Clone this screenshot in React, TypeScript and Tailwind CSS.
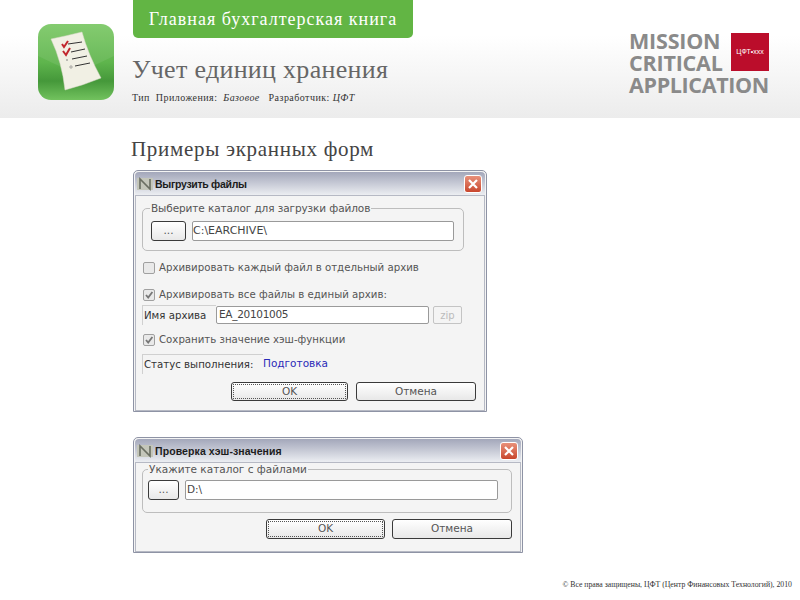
const sans = "font-['DejaVu_Sans',sans-serif]";

function AppIcon() {
  return (
    <svg width="76" height="76" viewBox="0 0 76 76" className="shrink-0">
      <defs>
        <linearGradient id="ig" x1="0" y1="0" x2="0" y2="1">
          <stop offset="0" stopColor="#7ac864" />
          <stop offset="0.5" stopColor="#5fb54d" />
          <stop offset="0.75" stopColor="#45983a" />
          <stop offset="1" stopColor="#72c25e" />
        </linearGradient>
      </defs>
      <rect x="0" y="0" width="76" height="76" rx="13" fill="url(#ig)" />
      <path d="M0 32 L38 50 L76 32 L76 13 Q76 0 63 0 L13 0 Q0 0 0 13 Z" fill="#fff" opacity="0.08" />
      <path d="M13 15 Q28 12 44 8 Q50 30 63 54 Q46 61 27 66 Q24 38 13 15 Z" fill="#f1f0e4" stroke="#d9d8c8" strokeWidth="0.5" />
      <g stroke="#333" strokeWidth="1" fill="none">
        <path d="M30 20 L44 18" />
        <path d="M33 28 L47 25" />
        <path d="M34 35 L49 32" />
        <path d="M37 42 L52 39" />
      </g>
      <g stroke="#c1272d" strokeWidth="2" fill="none">
        <path d="M24 20 L26 23 L30 17" />
        <path d="M25 27 L28 31 L32 24" />
      </g>
      <circle cx="29" cy="36" r="0.8" fill="#777" />
      <circle cx="33" cy="43" r="1.2" fill="none" stroke="#777" strokeWidth="0.6" />
    </svg>
  );
}

function CloseBtn() {
  return (
    <div className="w-[18px] h-[18px] rounded-[3px] border border-white bg-gradient-to-b from-[#e8907a] to-[#c8452c] flex items-center justify-center shrink-0">
      <svg width="12" height="12" viewBox="0 0 12 12">
        <path d="M2 2 L10 10 M10 2 L2 10" stroke="#fff" strokeWidth="2.2" />
      </svg>
    </div>
  );
}

function TitleBar({ title, titleClass }: { title: string; titleClass: string }) {
  return (
    <div className="h-[23px] flex items-center pl-[2px] pr-[3px] bg-gradient-to-b from-[#a3a7ba] to-[#eceef2] rounded-t-[4px]">
      <svg width="16" height="14" viewBox="0 0 16 14" className="shrink-0">
        <rect x="0" y="1" width="16" height="12" fill="#c4c6ba" />
        <path d="M3 12 L3 2 L13 12 L13 2" stroke="#6a6e62" strokeWidth="1.6" fill="none" />
      </svg>
      <span className={`${titleClass} ml-[2px] mt-[2px] grow text-[10.5px] font-bold text-[#1c1c1c] font-['Liberation_Sans',sans-serif]`}>{title}</span>
      <CloseBtn />
    </div>
  );
}

function Button({ label, focused, className }: { label: string; focused?: boolean; className: string }) {
  return (
    <div
      className={`${className} rounded-[3px] border border-[#3a3a3a] bg-gradient-to-b from-white to-[#e8e8e8] flex items-center justify-center text-[10.5px] text-[#555] ${sans} ${focused ? "p-px" : ""}`}
    >
      {focused ? (
        <span className="w-full h-full border border-dotted border-[#555] flex items-center justify-center">{label}</span>
      ) : (
        label
      )}
    </div>
  );
}

function Input({ value, className }: { value: string; className: string }) {
  return (
    <div className={`${className} border border-[#9a9a9a] rounded-[2px] bg-white flex items-center text-[#444] ${sans}`}>
      {value}
    </div>
  );
}

function Group({ legend, legendClass, children, className }: { legend: string; legendClass: string; children: React.ReactNode; className: string }) {
  return (
    <div className={`${className} relative border border-[#bdbdbd] rounded-[5px]`}>
      <span className={`${legendClass} absolute -top-[7px] bg-[#f4f4f4] px-px text-[10.5px] leading-[13px] text-[#555] ${sans}`}>{legend}</span>
      {children}
    </div>
  );
}

function Check({ label, checked }: { label: string; checked?: boolean }) {
  return (
    <div className="h-[14px] flex items-center pl-[7px]">
      <div className="w-[12px] h-[12px] border border-[#a0a0a0] rounded-[2px] bg-[#e9e9e9] flex items-center justify-center">
        {checked && (
          <svg width="10" height="10" viewBox="0 0 10 10">
            <path d="M2 5 L4.2 7.6 L8.4 2" stroke="#777" strokeWidth="1.8" fill="none" />
          </svg>
        )}
      </div>
      <span className={`ml-[4px] text-[10.2px] text-[#555] ${sans}`}>{label}</span>
    </div>
  );
}

function Dialog1() {
  return (
    <div className="w-[354px] h-[242px] p-px border border-[#8e93a5] rounded-t-[5px] bg-[#f4f4f4]">
      <TitleBar title="Выгрузить файлы" titleClass="tracking-[-0.3px]" />
      <div className="border border-[#b6b9c4] h-[216px] pt-[12px]">
        <Group legend="Выберите каталог для загрузки файлов" legendClass="left-[7px] tracking-[-0.1px]" className="ml-[6px] w-[322px] h-[43px] pt-[12px] pl-[8px] flex gap-[6px]">
          <Button label="..." className="w-[35px] h-[20px]" />
          <Input value="C:\EARCHIVE\" className="w-[262px] h-[20px] text-[11px]" />
        </Group>
        <div className="mt-[10px]"><Check label="Архивировать каждый файл в отдельный архив" /></div>
        <div className="mt-[13px]"><Check checked label="Архивировать все файлы в единый архив:" /></div>
        <div className="mt-[3px] flex items-center h-[20px] pl-[6px]">
          <span className={`w-[74px] h-[20px] border-l border-t border-[#d0d0d0] pl-px flex items-center text-[10.2px] text-[#333] ${sans}`}>Имя архива</span>
          <Input value="EA_20101005" className="w-[213px] h-[18px] pl-[2px] text-[10.5px] tracking-[-0.3px]" />
          <div className={`ml-[4px] w-[29px] h-[18px] border border-[#c4c4c4] rounded-[2px] flex items-center justify-center text-[10px] text-[#bbb] ${sans}`}>zip</div>
        </div>
        <div className="mt-[8px]"><Check checked label="Сохранить значение хэш-функции" /></div>
        <div className={`mt-[7px] flex items-center h-[20px] pl-[6px] text-[10.2px] ${sans}`}>
          <span className="w-[121px] h-[20px] border-l border-t border-[#d0d0d0] pl-px flex items-center text-[#333]">Статус выполнения:</span>
          <span className="text-[#2a2ab8] text-[10.5px]">Подготовка</span>
        </div>
        <div className="mt-[8px] pl-[95px] flex gap-[8px]">
          <Button focused label="OK" className="w-[117px] h-[19px]" />
          <Button label="Отмена" className="w-[120px] h-[19px]" />
        </div>
      </div>
    </div>
  );
}

function Dialog2() {
  return (
    <div className="w-[390px] h-[116px] p-px border border-[#8e93a5] rounded-t-[5px] bg-[#f4f4f4]">
      <TitleBar title="Проверка хэш-значения" titleClass="tracking-[0.1px]" />
      <div className="border border-[#b6b9c4] h-[90px] pt-[6px]">
        <Group legend="Укажите каталог с файлами" legendClass="left-[5px]" className="ml-[6px] w-[370px] h-[44px] pt-[10px] pl-[5px] flex gap-[6px]">
          <Button label="..." className="w-[31px] h-[20px]" />
          <Input value="D:\" className="w-[313px] h-[20px] pl-px text-[10.5px]" />
        </Group>
        <div className="mt-[6px] pl-[130px] flex gap-[7px]">
          <Button focused label="OK" className="w-[119px] h-[20px]" />
          <Button label="Отмена" className="w-[120px] h-[20px]" />
        </div>
      </div>
    </div>
  );
}

function Logo() {
  return (
    <div className="w-[140px] mt-[30px] shrink-0 font-['Open_Sans',sans-serif] font-bold text-[#8a8a8a] text-[21.5px] leading-[22px]">
      <div className="flex justify-between">
        <div className="tracking-[-0.2px]">
          <div>MISSION</div>
          <div>CRITICAL</div>
        </div>
        <div className="w-[38px] h-[38px] mt-[3px] bg-[#bb0d2b] flex items-center justify-center text-[7px] font-normal text-white font-['Liberation_Sans',sans-serif]">ЦФТ•ххх</div>
      </div>
      <div className="tracking-[-0.35px]">APPLICATION</div>
    </div>
  );
}

export default function App() {
  return (
    <div className="w-[800px] h-[600px] bg-white overflow-hidden flex flex-col font-['Liberation_Serif',serif]">
      <header className="h-[118px] bg-gradient-to-b from-white from-30% to-[#ececec] flex shrink-0">
        <div className="pl-[38px] pt-[24px]"><AppIcon /></div>
        <div className="ml-[19px] w-[280px]">
          <div className="h-[38px] rounded-b-[5px] bg-[#62b544] text-white text-[18px] tracking-[1px] flex items-center justify-center">Главная бухгалтерская книга</div>
          <h1 className="mt-[16px] -ml-[1px] text-[26px] leading-[32px] tracking-[0.3px] text-[#666] whitespace-nowrap">Учет единиц хранения</h1>
          <div className="mt-[6px] -ml-[1px] text-[10px] leading-[12px] tracking-[0.45px] text-[#333] whitespace-nowrap">Тип &nbsp;Приложения: &nbsp;<i>Базовое</i> &nbsp; Разработчик: <i>ЦФТ</i></div>
        </div>
        <div className="ml-[216px]"><Logo /></div>
      </header>
      <main className="pl-[133px] grow flex flex-col">
        <h2 className="-ml-[2px] mt-[19px] text-[21px] leading-[24px] tracking-[0.7px] text-[#444]">Примеры экранных форм</h2>
        <div className="mt-[9px]"><Dialog1 /></div>
        <div className="mt-[25px]"><Dialog2 /></div>
      </main>
      <footer className="pr-[8px] pb-[10px] text-right text-[7.75px] leading-[10px] text-[#333]">© Все права защищены, ЦФТ (Центр Финансовых Технологий), 2010</footer>
    </div>
  );
}
